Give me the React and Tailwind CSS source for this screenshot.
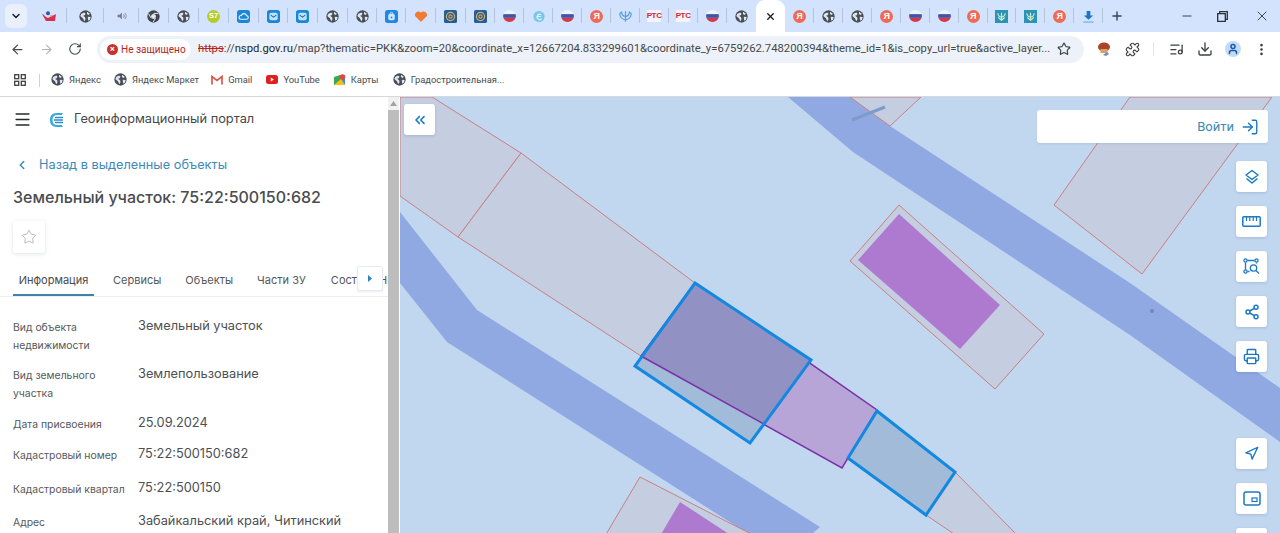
import React from "react";
import { ArrowLeft, ArrowRight, RotateCw, Star, Minus, Plus, X, ChevronDown, ChevronLeft, ChevronsLeft, Menu, Download, MoreVertical, Puzzle, Share2, Printer, Navigation, LogIn, ListMusic, User } from "lucide-react";

const Globe = ({ s = 13 }) => (
  <svg width={s} height={s} viewBox="0 0 16 16"><circle cx="8" cy="8" r="7.6" fill="#4a4f55" /><path d="M3 4.5 6.5 3l1.5 1.5-1 2-2 .5 2.5 2 .5 2.5-1.5 2.2L4.8 10 1.6 7.5ZM10 2l3.5 3-2.2 1-1.6-1.5ZM11 8.3l3.4.2-1 3.5-1.8 1.2-.8-3Z" fill="#dfe7f5" /></svg>
);
const Ya = () => (
  <span className="flex h-[13px] w-[13px] items-center justify-center rounded-full bg-[#ef6a56] text-[9px] font-bold leading-none text-white [font-family:'Liberation_Sans',sans-serif]">Я</span>
);
const Flag = () => (
  <svg width="13" height="12" viewBox="0 0 14 13"><defs><clipPath id="fl"><ellipse cx="7" cy="6.5" rx="7" ry="6.5" /></clipPath></defs><g clipPath="url(#fl)"><rect width="14" height="4.5" fill="#eef2fa" /><rect y="4.5" width="14" height="4" fill="#3f55a8" /><rect y="8.5" width="14" height="5" fill="#d2394a" /></g></svg>
);
const Mail = () => (
  <svg width="13" height="13" viewBox="0 0 14 14"><rect width="14" height="14" rx="3" fill="#1c86d6" /><rect x="2.5" y="3" width="9" height="8" rx="2" fill="#bfe3f8" /><path d="m4 5.5 3 2.2 3-2.2" fill="none" stroke="#1c6fb8" strokeWidth="1.2" /></svg>
);
const Cloud = () => (
  <svg width="13" height="13" viewBox="0 0 14 14"><rect width="14" height="14" rx="3" fill="#1c86d6" /><path d="M4 10h6a2 2 0 0 0 .3-4A3 3 0 0 0 4.600 6 2 2 0 0 0 4 10Z" fill="#1c86d6" stroke="#e6f4fd" strokeWidth="1.2" /></svg>
);
const Bag = () => (
  <svg width="13" height="13" viewBox="0 0 14 14"><rect width="14" height="14" rx="3" fill="#1f86e6" /><rect x="3.5" y="4" width="7" height="7" rx="2" fill="#cfe8fb" /><path d="M5.5 4.500V4a1.500 1.500 0 0 1 3 0v.5" fill="none" stroke="#cfe8fb" /><circle cx="7" cy="8" r="1" fill="#1f86e6" /></svg>
);
const Heart = () => (
  <svg width="14" height="13" viewBox="0 0 15 14"><path d="M7.5 13 1.4 6.8C-.8 3.6 4.8-.7 7.5 3c2.700-3.700 8.300.6 6.100 3.800Z" fill="#f07b32" /></svg>
);
const At = () => (
  <svg width="13" height="13" viewBox="0 0 14 14"><rect width="14" height="14" rx="2" fill="#235d9c" /><circle cx="7" cy="7" r="4.400" fill="none" stroke="#dcae5a" strokeWidth="1.300" /><circle cx="7" cy="7" r="1.800" fill="none" stroke="#e7a03f" strokeWidth="1.200" /></svg>
);
const Emblem = () => (
  <svg width="13" height="13" viewBox="0 0 15 14"><path d="M7.500 1v12M7.500 7C5 7 3.500 6 3 2c-1 .5-2.500 1-2 3 .5 3 3 5 6.500 6M7.500 7c2.500 0 4-1 4.500-5 1 .5 2.500 1 2 3-.5 3-3 5-6.500 6" fill="none" stroke="#5a9de0" strokeWidth="1.400" /></svg>
);
const Rts = () => (
  <span className="flex h-[12px] w-[14px] items-center justify-center bg-[#f3f5fb] text-[8px] font-bold leading-none tracking-[-0.3px] text-[#d8243a] [font-family:'Liberation_Sans',sans-serif]">РТС</span>
);
const Teal = () => (
  <svg width="13" height="13" viewBox="0 0 14 14"><rect width="14" height="14" fill="#2a93b8" /><path d="M7 3v8M7 7.500C5 7.500 3.500 6.500 3 3.500M7 7.500c2 0 3.500-1 4-4M3.500 8 7 11l3.500-3" fill="none" stroke="#d5ecc8" strokeWidth="1.300" /></svg>
);
const S7 = () => (
  <span className="flex h-[13px] w-[13px] items-center justify-center rounded-full bg-[#b5cc2e] text-[7.500px] font-bold leading-none text-white [font-family:'Liberation_Sans',sans-serif]">S7</span>
);
const Swirl = () => (
  <svg width="12" height="13" viewBox="0 0 14 14"><circle cx="7" cy="7" r="6.500" fill="#79c6ea" /><path d="M9.500 5A3 3 0 1 0 10 9.500M5 7h4.500" fill="none" stroke="#e2f3fb" strokeWidth="1.400" /></svg>
);
const Speaker = () => (
  <svg width="12" height="12" viewBox="0 0 14 14"><path d="M3 5.500h2.500L8 3v8L5.500 8.500H3Z" fill="#777c83" /><path d="M9.800 5a2.800 2.800 0 0 1 0 4M11.500 3.500a5 5 0 0 1 0 7" fill="none" stroke="#888d94" strokeWidth="1.200" /></svg>
);
const ChromeGrey = () => (
  <svg width="13" height="13" viewBox="0 0 16 16"><circle cx="8" cy="8" r="7.600" fill="#42464c" /><circle cx="8" cy="8" r="3" fill="#dfe7f5" /><path d="M8 4.200h6M5 10l-3-5.500M10.500 10 7.500 15" stroke="#dfe7f5" strokeWidth="1.200" /></svg>
);
const Brand = () => (
  <svg width="14" height="10" viewBox="0 0 14 10"><path d="M0 3c2 0 3 3 6 4l8-4-1 7H4Z" fill="#d8304a" /><circle cx="6" cy="2.200" r="2" fill="#2a55b0" /><path d="M7 5c2-1 3-1 5-1L9 6Z" fill="#e88a98" /></svg>
);
const DownloadFav = () => (
  <svg width="13" height="13" viewBox="0 0 14 14"><path d="M5 1h4v5h3L7 10.500 2 6h3Z" fill="#1b75c9" /><path d="M1.500 13h11" stroke="#7fb4e4" strokeWidth="1.500" /></svg>
);

const tabs = [
  [Brand, "w-[37px]"], [Globe, "w-[37px]"], [Speaker, "w-[34.500px]"], [ChromeGrey, "w-[30px]"], [Globe, "w-[30px]"], [S7, "w-[30px]"], [Cloud, "w-[30px]"], [Mail, "w-[29.500px]"], [Mail, "w-[29.500px]"], [Globe, "w-[30px]"], [Globe, "w-[29.500px]"], [Bag, "w-[29px]"], [Heart, "w-[29.500px]"], [At, "w-[30px]"], [At, "w-[29.500px]"], [Flag, "w-[29px]"], [Swirl, "w-[29px]"], [Flag, "w-[29.200px]"], [Ya, "w-[29px]"], [Emblem, "w-[28.500px]"], [Rts, "w-[29px]"], [Rts, "w-[29px]"], [Flag, "w-[29px]"], [Globe, "w-[29px]"],
];
const tabs2 = [
  [Ya, "w-[29.500px]"], [Globe, "w-[29px]"], [Globe, "w-[29px]"], [Ya, "w-[29px]"], [Flag, "w-[28.500px]"], [Flag, "w-[29px]"], [Ya, "w-[29px]"], [Teal, "w-[28.500px]"], [Teal, "w-[29px]"], [Ya, "w-[29px]"], [DownloadFav, "w-[29px]"],
];

const Tab = ({ I, w, last }) => (
  <div className={`relative flex h-full shrink-0 items-center justify-center ${w}`}>
    <I />
    {!last && <span className="absolute right-0 top-[8px] h-[15px] w-px bg-[#b4c4dc]" />}
  </div>
);

const bookmarks = [
  [<Globe s={13} />, "Яндекс", "mr-[13px]"],
  [<Globe s={13} />, "Яндекс Маркет", "mr-[12px]"],
  [<svg width="12" height="10" viewBox="0 0 12 10"><path d="M1 9.500V1.500L6 5.500l5-4v8" fill="none" stroke="#d9584a" strokeWidth="1.700" /></svg>, "Gmail", "mr-[14px]"],
  [<svg width="12" height="9" viewBox="0 0 12 9"><rect width="12" height="9" rx="2.500" fill="#e02020" /><path d="m4.800 2.500 3 2-3 2Z" fill="#fff" /></svg>, "YouTube", "mr-[14px]"],
  [<svg width="12" height="12" viewBox="0 0 12 12"><path d="M0 3 6 1v10L0 11Z" fill="#3aa757" /><path d="M6 1h5v10H6Z" fill="#4a86e8" /><path d="m0 11 7-6 4 6Z" fill="#f4c20d" /><circle cx="8.500" cy="3" r="2.800" fill="#e04a3a" /></svg>, "Карты", "mr-[14px]"],
  [<Globe s={13} />, "Градостроительная...", ""],
];

const rows = [
  ["Вид объекта\nнедвижимости", "Земельный участок", "h-[48px]"],
  ["Вид земельного\nучастка", "Землепользование", "h-[49px]"],
  ["Дата присвоения", "25.09.2024", "h-[31px]"],
  ["Кадастровый номер", "75:22:500150:682", "h-[34px]"],
  ["Кадастровый квартал", "75:22:500150", "h-[33px]"],
  ["Адрес", "Забайкальский край, Читинский", "h-[30px]"],
];

const Ctl = ({ children, cls = "" }) => (
  <div className={`flex h-[31px] w-[31px] items-center justify-center rounded-[3px] bg-white text-[#1b78c4] shadow-[0_1px_3px_rgba(60,80,120,0.2)] ${cls}`}>{children}</div>
);

export default function App() {
  return (
    <div className="flex h-[533px] w-[1280px] flex-col overflow-hidden bg-white text-[#3c4043] [font-family:Roboto,sans-serif]">
      {/* tab strip */}
      <div className="flex h-[32px] shrink-0 items-center bg-[#d3e3fd]">
        <div className="ml-[5px] mr-[3px] flex h-[24px] w-[22px] items-center justify-center rounded-[6px] bg-[#e9effb] text-[#202124]">
          <ChevronDown size={12} strokeWidth={3} />
        </div>
        <div className="flex h-full">
          {tabs.map(([I, w], i) => <Tab key={i} I={I} w={w} last={i === tabs.length - 1} />)}
          <div className="flex h-[32px] w-[29px] shrink-0 items-center justify-center rounded-t-[9px] bg-white text-[#202124]">
            <X size={11} strokeWidth={3} />
          </div>
          {tabs2.map(([I, w], i) => <Tab key={i} I={I} w={w} />)}
        </div>
        <Plus size={14} strokeWidth={2.500} className="ml-[7px] text-[#3f4650]" />
        <div className="ml-auto flex items-center text-[#2b2f36]">
          <Minus size={14} strokeWidth={1.500} className="mr-[23px]" />
          <svg width="11" height="11" viewBox="0 0 11 11" className="mr-[26px]"><path d="M.7 2.700h7.600v7.600H.7ZM2.700 2.500V.7h7.600v7.600H8.500" fill="none" stroke="#2b2f36" strokeWidth="1.300" /></svg>
          <X size={16} strokeWidth={1.300} className="mr-[10px]" />
        </div>
      </div>

      {/* toolbar */}
      <div className="flex h-[34px] shrink-0 items-center rounded-t-[8px] bg-white">
        <ArrowLeft size={15} strokeWidth={2} className="ml-[10px] text-[#474c52]" />
        <ArrowRight size={15} strokeWidth={1.700} className="ml-[14px] text-[#b3b6bb]" />
        <RotateCw size={14} strokeWidth={2} className="ml-[14px] text-[#474c52]" />
        <div className="ml-[15px] flex h-[27px] w-[987px] items-center rounded-full bg-[#edf2fa]">
          <div className="ml-[3px] flex h-[21px] w-[91px] shrink-0 items-center rounded-full bg-white">
            <span className="ml-[7px] flex h-[11px] w-[11px] items-center justify-center rounded-full bg-[#c5342c] text-[9px] font-bold leading-none text-white">×</span>
            <span className="ml-[3px] whitespace-nowrap text-[10px] text-[#b3261e]">Не защищено</span>
          </div>
          <div className="ml-[7px] w-[850px] shrink-0 whitespace-nowrap text-[11.300px] text-[#474747]">
            <span className="text-[#b3261e] line-through">https</span>://<span className="text-[#1f1f1f]">nspd.gov.ru</span>/map?thematic=PKK&amp;zoom=20&amp;coordinate_x=12667204.833299601&amp;coordinate_y=6759262.748200394&amp;theme_id=1&amp;is_copy_url=true&amp;active_layer...
          </div>
          <Star size={14} strokeWidth={2} className="ml-[9px] text-[#3c4043]" />
        </div>
        <svg width="16" height="16" viewBox="0 0 16 16" className="ml-[12px]"><ellipse cx="8" cy="6" rx="6" ry="4.500" fill="#a8442a" /><rect x="4.500" y="8" width="7" height="4" fill="#d9a067" /><path d="m7 14 4-3 2 2-3 2Z" fill="#6f8fb8" /></svg>
        <Puzzle size={15} strokeWidth={1.800} className="ml-[13px] text-[#3c4043]" />
        <span className="ml-[13px] h-[14px] w-px bg-[#dfe3ea]" />
        <ListMusic size={15} strokeWidth={2} className="ml-[15px] text-[#3c4043]" />
        <Download size={16} strokeWidth={2} className="ml-[13px] text-[#3c4043]" />
        <div className="ml-[12px] flex h-[16px] w-[16px] items-center justify-center rounded-full bg-[#c2dcf7] text-[#1a56b0]">
          <User size={12} strokeWidth={3} />
        </div>
        <MoreVertical size={15} strokeWidth={2.200} className="ml-[13px] text-[#3c4043]" />
      </div>

      {/* bookmarks */}
      <div className="flex h-[31px] shrink-0 items-center border-b border-[#d5d8dd] bg-white pb-[2px] text-[9.400px] text-[#474b50]">
        <svg width="12" height="12" viewBox="0 0 12 12" className="ml-[14px]"><g fill="none" stroke="#3c4043" strokeWidth="1.300"><rect x=".7" y=".7" width="4" height="4" /><rect x="7.300" y=".7" width="4" height="4" /><rect x=".7" y="7.300" width="4" height="4" /><rect x="7.300" y="7.300" width="4" height="4" /></g></svg>
        <span className="ml-[13px] mr-[11px] h-[13px] w-px bg-[#cfd3d9]" />
        {bookmarks.map(([ic, t, m], i) => (
          <div key={i} className={`flex items-center gap-[5px] ${m}`}>{ic}<span>{t}</span></div>
        ))}
      </div>

      {/* main */}
      <div className="flex min-h-0 flex-1">
        <div className="flex w-[400px] shrink-0 [font-family:Inter,sans-serif]">
          <div className="w-[388px] overflow-hidden bg-white">
            <div className="flex h-[45px] items-center pl-[13px]">
              <Menu size={19} strokeWidth={2} className="text-[#26282b]" />
              <svg width="16" height="16" viewBox="0 0 16 16" className="ml-[17px]"><path d="M14 1H8C3 1 1 4 1 8s2 7 7 7h6c-1-1-1-2-1-2H8c-3 0-4.500-2-4.500-5S5 3 8 3h5c0 0 0-1 1-2Z" fill="#37a9dc" /><path d="M6 5.500h8M5 8h9M6 10.500h8" stroke="#2f8fd0" strokeWidth="1.500" /></svg>
              <span className="ml-[9px] text-[12.800px] leading-none text-[#44484c]">Геоинформационный портал</span>
            </div>
            <div className="mt-[12px] flex h-[22px] items-center pl-[15px] text-[#3d8ab8]">
              <ChevronLeft size={14} strokeWidth={2.500} />
              <span className="ml-[10px] text-[12.750px] leading-none">Назад в выделенные объекты</span>
            </div>
            <div className="mt-[10px] pl-[13px] text-[16px] font-medium leading-[22px] text-[#4a4c4f]">Земельный участок: 75:22:500150:682</div>
            <div className="ml-[13px] mt-[13px] flex h-[32px] w-[32px] items-center justify-center rounded-[3px] bg-white shadow-[0_1px_4px_rgba(90,100,120,0.18)]">
              <Star size={16} strokeWidth={1.200} className="text-[#a6a9ad]" />
            </div>
            <div className="relative mt-[12px] flex h-[32px] items-start overflow-hidden whitespace-nowrap border-b border-[#eceff2] text-[11px] text-[#53575b]">
              <div className="ml-[13px] flex h-[31px] w-[81px] shrink-0 items-center justify-center border-b-[2px] border-[#3e84a8] pt-[2px] text-[#47494c]">Информация</div>
              <span className="ml-[19px] mt-[7px]">Сервисы</span>
              <span className="ml-[24px] mt-[7px]">Объекты</span>
              <span className="ml-[24px] mt-[7px]">Части ЗУ</span>
              <span className="ml-[25px] mt-[7px]">Состав ЕНК</span>
              <div className="absolute left-[357px] top-[1px] flex h-[25px] w-[26px] items-center justify-center rounded-[2px] border border-[#e4ebf2] bg-white shadow-[0_1px_2px_rgba(90,110,140,0.12)]">
                <svg width="4" height="7" viewBox="0 0 4 7"><path d="M0 0 4 3.500 0 7Z" fill="#2f83b8" /></svg>
              </div>
            </div>
            <div className="pl-[13px] pt-[22px]">
              {rows.map(([k, v, h], i) => (
                <div key={i} className={`flex ${h}`}>
                  <div className="w-[125px] shrink-0 whitespace-pre-line text-[10.400px] leading-[18px] text-[#55585c]">{k}</div>
                  <div className="mt-[-3px] whitespace-nowrap text-[12.800px] leading-[20px] text-[#4c4f53]">{v}</div>
                </div>
              ))}
            </div>
          </div>
          <div className="flex w-[12px] shrink-0 flex-col border-r border-white bg-[#f1f1f1]">
            <div className="flex h-[13px] items-center justify-center">
              <svg width="7" height="5" viewBox="0 0 7 5"><path d="M0 5 3.500 0 7 5Z" fill="#a3a3a3" /></svg>
            </div>
            <div className="flex-1 bg-[#bdbdbd]" />
          </div>
        </div>

        <div className="relative min-w-0 flex-1 overflow-hidden bg-[#c1d6ef]">
          <svg width="880" height="436" viewBox="400 97 880 436" className="absolute left-0 top-0">
            <path d="M788 97 853 152 1130 335 1280 442V388L1130 283 890 126 850 97Z" fill="#90a9e2" />
            <path d="M400 212 477 310 820 527 813 533H747L447 342 400 283Z" fill="#90a9e2" />
            <g fill="#c5cde0" stroke="#c98080" strokeWidth="1">
              <path d="M432 97 521 153 458 237 400 196V97Z" />
              <path d="M521 153 695 283 641 356 458 237Z" />
              <path d="M850 97 890 126 921 97Z" />
              <path d="M1130 97H1272L1142 274 1054 205Z" />
              <path d="M899 205 1044 334 995 389 850 261Z" />
              <path d="M640 477 755 536H605Z" />
              <path d="M955 472 1018 536H957L926 515Z" />
            </g>
            <path d="M852 120 885 107" stroke="#7e9cc9" strokeWidth="3" />
            <path d="M899 214 1000 305 960 349 858 260Z" fill="#ae7ad0" />
            <path d="M680 502 732 536H660Z" fill="#ae7ad0" />
            <path d="M695 283 877 410 842 468 641 356Z" fill="#b8a5d8" stroke="#7b32a8" strokeWidth="1.500" />
            <path d="M695 283 811 360 750 443 635 366Z" fill="#a1bbd8" />
            <path d="M695 283 811 360 764 424 641 356Z" fill="#9191c3" />
            <path d="M641 356 764 424" stroke="#7b32a8" strokeWidth="1.500" fill="none" />
            <path d="M695 283 811 360 750 443 635 366Z" fill="none" stroke="#1288e0" strokeWidth="3" />
            <path d="M877 411 955 472 926 515 848 458Z" fill="#a1bbd8" stroke="#1288e0" strokeWidth="3" />
            <circle cx="1152" cy="311" r="2" fill="#7385bd" />
          </svg>

          <Ctl cls="absolute left-[4px] top-[7px]"><ChevronsLeft size={16} strokeWidth={2.500} className="text-[#1f7fc4]" /></Ctl>

          <div className="absolute right-[12px] top-[13px] flex h-[33px] w-[231px] items-center justify-end rounded-[3px] bg-white pr-[9px] text-[#3d8ab8] shadow-[0_1px_2px_rgba(60,80,120,0.12)]">
            <span className="mr-[7px] text-[13px] leading-none">Войти</span>
            <LogIn size={18} strokeWidth={1.800} className="text-[#1b78c4]" />
          </div>

          <div className="absolute right-[13px] top-[64px] flex flex-col gap-[14px]">
            <Ctl>
              <svg width="16" height="16" viewBox="0 0 16 16" fill="none" stroke="#1b78c4" strokeWidth="1.500" strokeLinejoin="round"><path d="M8 1.500 14 6 8 10.500 2 6Z" /><path d="M2.500 9.500 8 14l5.500-4.500" /></svg>
            </Ctl>
            <Ctl>
              <svg width="19" height="11" viewBox="0 0 19 11" fill="none" stroke="#1b78c4" strokeWidth="1.500"><rect x=".8" y=".8" width="17.400" height="9.400" rx="1" /><path d="M4.500 1v4M7.800 1v4M11.200 1v4M14.500 1v4" strokeWidth="1.200" /></svg>
            </Ctl>
            <Ctl>
              <svg width="17" height="17" viewBox="0 0 17 17" fill="none" stroke="#1b78c4" strokeWidth="1.300"><circle cx="2.500" cy="2.500" r="1.600" /><circle cx="13.500" cy="2.500" r="1.600" /><circle cx="2.500" cy="13.500" r="1.600" /><path d="M4.500 2.500h7M2.500 4.500v7M4.500 13.500h2M13.500 4.500v1" /><circle cx="10.500" cy="10" r="3.200" /><path d="m13 12.500 3 3" /></svg>
            </Ctl>
            <Ctl><Share2 size={16} strokeWidth={2.200} /></Ctl>
            <Ctl><Printer size={17} strokeWidth={2} /></Ctl>
          </div>

          <div className="absolute right-[13px] top-[341px] flex flex-col gap-[14px]">
            <Ctl><Navigation size={15} strokeWidth={2.200} /></Ctl>
            <Ctl>
              <svg width="18" height="15" viewBox="0 0 18 15" fill="none" stroke="#1b78c4"><rect x="1" y="1" width="16" height="13" rx="2" strokeWidth="1.500" /><rect x="9" y="7" width="5" height="3.500" strokeWidth="1.200" /></svg>
            </Ctl>
            <Ctl />
          </div>
        </div>
      </div>
    </div>
  );
}
